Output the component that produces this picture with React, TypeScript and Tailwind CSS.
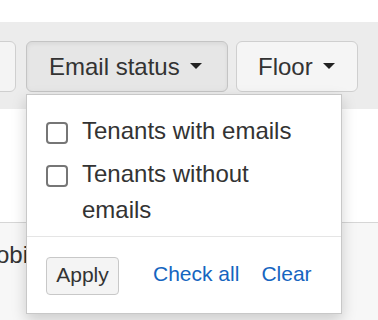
import React from "react";

function Caret() {
  return (
    <span className="inline-block w-0 h-0 border-l-[6px] border-r-[6px] border-t-[6px] border-l-transparent border-r-transparent border-t-[#222] ml-[10px] relative top-[-1px]" />
  );
}

function Check({ label }: { label: React.ReactNode }) {
  return (
    <label className="flex items-start gap-[14px]">
      <span className="mt-[9px] w-[22px] h-[22px] shrink-0 rounded-[4px] border-2 border-[#767676] bg-white" />
      <span className="text-[24px] leading-[36px] text-[#333]">{label}</span>
    </label>
  );
}

export default function App() {
  return (
    <div
      className="relative w-[378px] h-[320px] overflow-hidden bg-white"
      style={{ fontFamily: '"Liberation Sans", Arial, sans-serif' }}
    >
      <div className="h-[22px] bg-white" />
      <div className="h-[87px] bg-[#ececec] flex items-start pt-[19px] gap-[10px]">
        <div className="-ml-[24px] w-[40px] h-[51px] rounded-[6px] border border-[#cfcfcf] bg-[#f4f4f4]" />
        <div className="flex gap-[8px]">
          <button className="w-[202px] h-[51px] rounded-[6px] border border-[#c4c4c4] bg-[#e6e6e6] shadow-[inset_0_2px_4px_rgba(0,0,0,0.06)] flex items-center pl-[22px] text-[24px] text-[#333]">
            Email status
            <Caret />
          </button>
          <button className="w-[122px] h-[51px] rounded-[6px] border border-[#cfcfcf] bg-[#f5f5f5] flex items-center pl-[21px] text-[24px] text-[#333]">
            Floor
            <Caret />
          </button>
        </div>
      </div>
      <div className="h-[113px] bg-white" />
      <div className="border-t border-[#d6d6d6] bg-[#f7f7f7] h-[100px] flex items-start pt-[14px]">
        <span className="-ml-[4px] text-[24px] leading-[36px] text-[#333]">obi</span>
      </div>

      <div className="absolute left-[26px] top-[94px] w-[316px] h-[220px] bg-white border border-[#c8c8c8] shadow-[0_6px_14px_rgba(0,0,0,0.18)] flex flex-col">
        <div className="pt-[18px] pb-[8px] pl-[19px] pr-[10px] flex flex-col gap-[7px]">
          <Check label="Tenants with emails" />
          <Check
            label={
              <>
                Tenants without
                <br />
                emails
              </>
            }
          />
        </div>
        <div className="border-t border-[#e5e5e5] pt-[20px] pl-[19px] flex items-center">
          <button className="w-[73px] h-[38px] rounded-[4px] border border-[#c8c8c8] bg-[#f4f4f4] text-[21px] text-[#333] flex items-center justify-center pb-[2px]">
            Apply
          </button>
          <span className="ml-[34px] text-[21px] text-[#1565c0] relative top-[-2px]">Check all</span>
          <span className="ml-[22px] text-[21px] text-[#1565c0] relative top-[-2px]">Clear</span>
        </div>
      </div>
    </div>
  );
}
